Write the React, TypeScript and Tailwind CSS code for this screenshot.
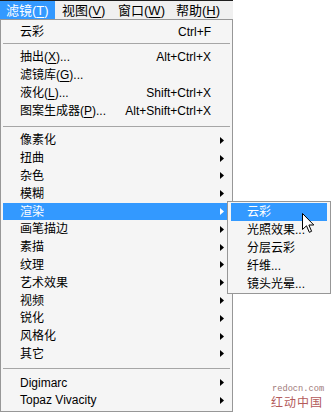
import React from "react";

const F = "font-['Liberation_Sans','Noto_Sans_CJK_SC',sans-serif]";

function Arrow({ white }: { white?: boolean }) {
  return (
    <svg width="4" height="7" viewBox="0 0 4 7" className="block">
      <path d="M0 0L4 3.5L0 7Z" fill={white ? "#ffffff" : "#000000"} />
    </svg>
  );
}

function U({ c }: { c: string }) {
  return <span className="underline underline-offset-[2px] decoration-1">{c}</span>;
}

type ItemProps = {
  label: React.ReactNode;
  shortcut?: string;
  sub?: boolean;
  active?: boolean;
};

function Item({ label, shortcut, sub, active }: ItemProps) {
  return (
    <div
      className={`mx-[2px] flex h-[17.8px] items-center pl-[17px] pr-[6px] text-[12px] leading-none ${
        active ? "bg-[#3399ff] text-white" : "text-black"
      }`}
    >
      <span className="whitespace-nowrap">{label}</span>
      {shortcut && <span className="ml-auto mr-[9px] whitespace-nowrap">{shortcut}</span>}
      <span className={`${shortcut ? "" : "ml-auto"} flex w-[4px] justify-end`}>
        {sub && <Arrow white={active} />}
      </span>
    </div>
  );
}

function Sep({ h, top }: { h: string; top: string }) {
  return (
    <div className={`mx-[2px] ${h} ${top}`}>
      <div className="h-px bg-[#a6a6a6]" />
    </div>
  );
}

function SubItem({ label, active }: { label: string; active?: boolean }) {
  return (
    <div
      className={`mx-[3px] flex h-[18px] items-center pl-[16px] text-[12px] leading-none ${
        active ? "bg-[#3399ff] text-white" : "text-black"
      }`}
    >
      <span className="whitespace-nowrap">{label}</span>
    </div>
  );
}

export default function App() {
  const group3 = [
    "像素化",
    "扭曲",
    "杂色",
    "模糊",
    "渲染",
    "画笔描边",
    "素描",
    "纹理",
    "艺术效果",
    "视频",
    "锐化",
    "风格化",
    "其它",
  ];
  return (
    <div className={`relative h-[413px] w-[332px] overflow-hidden bg-white ${F}`}>
      {/* menu bar */}
      <div className="flex h-[19px] w-[233px] border-t border-[#1e1e1e] bg-[#f0f0f0] text-[13px] leading-none">
        <div className="flex h-[18px] w-[55px] items-center bg-[#3399ff] pl-[6px] text-white">
          滤镜(<U c="T" />)
        </div>
        <div className="flex h-[18px] w-[56px] items-center pl-[7px] text-black">
          视图(<U c="V" />)
        </div>
        <div className="flex h-[18px] w-[59px] items-center pl-[7px] text-black">
          窗口(<U c="W" />)
        </div>
        <div className="flex h-[18px] items-center pl-[6px] text-black">
          帮助(<U c="H" />)
        </div>
      </div>

      {/* dropdown */}
      <div className="h-[393px] w-[233px] border border-[#979797] bg-[#f5f5f5] pt-[3.1px]">
        <Item label="云彩" shortcut="Ctrl+F" />
        <Sep h="h-[7.7px]" top="pt-[2.1px]" />
        <Item
          label={
            <>
              抽出(<U c="X" />)...
            </>
          }
          shortcut="Alt+Ctrl+X"
        />
        <Item
          label={
            <>
              滤镜库(<U c="G" />)...
            </>
          }
        />
        <Item
          label={
            <>
              液化(<U c="L" />)...
            </>
          }
          shortcut="Shift+Ctrl+X"
        />
        <Item
          label={
            <>
              图案生成器(<U c="P" />)...
            </>
          }
          shortcut="Alt+Shift+Ctrl+X"
        />
        <Sep h="h-[11.7px]" top="pt-[6px]" />
        {group3.map((g) => (
          <Item key={g} label={g} sub active={g === "渲染"} />
        ))}
        <Sep h="h-[10.9px]" top="pt-[5.2px]" />
        <Item label="Digimarc" sub />
        <Item label="Topaz Vivacity" sub />
      </div>

      {/* submenu */}
      <div className="absolute left-[227px] top-[201px] h-[93px] w-[104px] border border-[#979797] bg-[#f5f5f5] pt-px">
        <SubItem label="云彩" active />
        <SubItem label="光照效果..." />
        <SubItem label="分层云彩" />
        <SubItem label="纤维..." />
        <SubItem label="镜头光晕..." />
      </div>

      {/* cursor */}
      <svg
        className="absolute left-[302px] top-[213px]"
        width="13"
        height="21"
        viewBox="0 0 13 21"
      >
        <path
          d="M0.5 0.5 L0.5 16.5 L4.5 12.8 L7.3 19.3 L9.6 18.3 L6.9 12 L11.8 12 Z"
          fill="#ffffff"
          stroke="#000000"
          strokeWidth="1"
          strokeLinejoin="miter"
        />
      </svg>

      {/* watermark */}
      <div className="absolute left-[272px] top-[385px] h-[9px] font-['Liberation_Mono',monospace] text-[8.7px] leading-[9px] text-[#a07a7a]">
        redocn.com
      </div>
      <div className="absolute left-[271px] top-[396px] h-[12px] font-['Noto_Sans_CJK_SC',sans-serif] text-[12px] leading-[12px] tracking-[1px] text-[#b35a5a]">
        红动中国
      </div>
    </div>
  );
}
